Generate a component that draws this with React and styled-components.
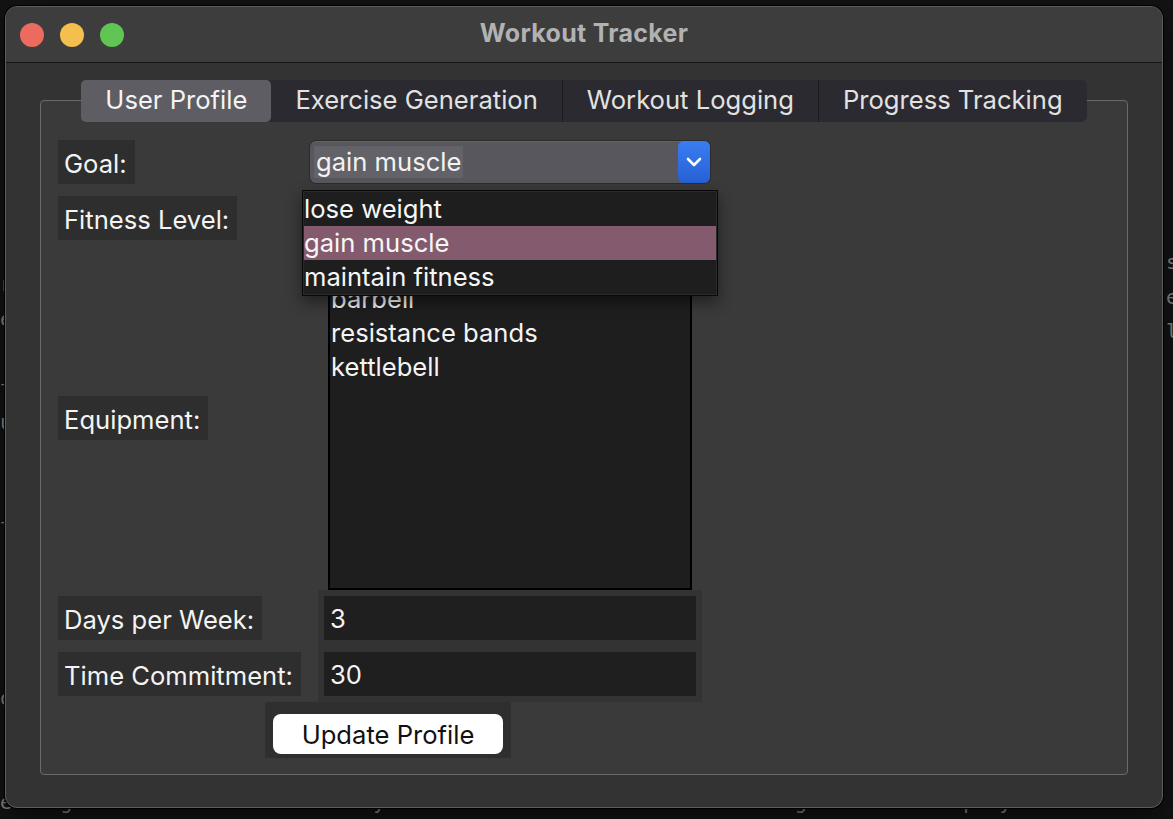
import React from "react";
import styled, { createGlobalStyle } from "styled-components";

const GlobalStyle = createGlobalStyle`
  html, body {
    margin: 0;
    padding: 0;
    background: #131313;
  }
  body {
    font-family: Inter, "Noto Sans", sans-serif;
  }
`;

const FONT = "25.6px";

const Desktop = styled.div`
  position: relative;
  width: 1173px;
  height: 819px;
  overflow: hidden;
  background: #131313;
  display: grid;
  grid-template-columns: 1166px 1fr;
  align-items: end;
`;

const Backdrop = styled.pre`
  margin: 0;
  font-family: "DejaVu Sans Mono", "Liberation Mono", monospace;
  font-size: 20px;
  line-height: 34.5px;
  color: #8a8a8a;
  white-space: pre;
  overflow: hidden;
  align-self: ${(p) => (p.$top ? "start" : "end")};
  padding-top: ${(p) => (p.$top ? "245px" : "0")};
`;

const Window = styled.div`
  position: absolute;
  left: 5px;
  top: 6px;
  width: 1158px;
  height: 802px;
  box-sizing: border-box;
  border: 1px solid #5c5c5c;
  border-radius: 12px;
  background: #333333;
  overflow: hidden;
  display: flex;
  flex-direction: column;
  box-shadow: 0 0 0 1px #000, 0 12px 34px rgba(0, 0, 0, 0.55);
`;

const TitleBar = styled.div`
  height: 55px;
  flex: none;
  background: #3d3d3d;
  border-bottom: 1px solid #141414;
  display: grid;
  grid-template-columns: 1fr auto 1fr;
  align-items: center;
`;

const Lights = styled.div`
  display: flex;
  gap: 16px;
  padding-left: 14px;
`;

const Light = styled.span`
  width: 24px;
  height: 24px;
  border-radius: 50%;
  background: ${(p) => p.$color};
`;

const Title = styled.div`
  font-size: 25px;
  font-weight: 700;
  color: #b2b2b2;
  letter-spacing: 0.3px;
  margin-top: -3px;
`;

const Content = styled.div`
  flex: 1;
  display: flex;
  flex-direction: column;
  padding: 17px 34px 32px;
`;

const TabBar = styled.div`
  align-self: center;
  display: flex;
  height: 42px;
  background: #2b2a30;
  border-radius: 6px;
  position: relative;
  z-index: 1;
  margin-bottom: -22px;
`;

const Tab = styled.div`
  display: flex;
  align-items: center;
  padding: 0 24px;
  font-size: ${FONT};
  line-height: 1;
  padding-bottom: 2px;
  color: ${(p) => (p.$active ? "#f4f4f4" : "#e2e2e2")};
  background: ${(p) => (p.$active ? "#5e5d63" : "transparent")};
  border-radius: ${(p) => (p.$active ? "5px" : "0")};
  border-left: ${(p) => (p.$divider ? "1px solid #1c1c1f" : "none")};
`;

const Pane = styled.div`
  flex: 1;
  border: 1px solid #6a6a6a;
  border-radius: 4px;
  background: #3a3a3a;
  padding: 33px 17px 0;
`;

const Form = styled.div`
  display: grid;
  grid-template-columns: 244px 416px;
  grid-template-rows: 56px 56px 344px 56px 56px 56px;
`;

const Label = styled.div`
  align-self: center;
  justify-self: start;
  height: 44px;
  box-sizing: border-box;
  padding: 3px 8px 0 6px;
  display: flex;
  align-items: center;
  background: #2e2e2e;
  font-size: ${FONT};
  color: #f4f4f4;
`;

const Field = styled.div`
  position: relative;
  display: flex;
  align-items: center;
  justify-content: center;
`;

const Combo = styled.div`
  width: 400px;
  height: 42px;
  box-sizing: border-box;
  border-radius: 6px;
  background: #58575d;
  display: flex;
  align-items: center;
  padding-left: 4px;
  box-shadow: inset 0 1px 0 rgba(255, 255, 255, 0.07), 0 0 0 1px rgba(0, 0, 0, 0.25);
`;

const ComboText = styled.span`
  height: 32px;
  line-height: 32px;
  padding: 0 2px;
  background: #636268;
  font-size: ${FONT};
  color: #f2f2f2;
`;

const ComboArrow = styled.span`
  margin-left: auto;
  width: 32px;
  height: 42px;
  border-radius: 6px;
  background: linear-gradient(#3a7df2, #2560d4);
  display: flex;
  align-items: center;
  justify-content: center;
`;

const Popup = styled.div`
  position: absolute;
  top: 100%;
  left: 0;
  right: 0;
  z-index: 5;
  border: 1px solid #070707;
  padding: 1px;
  background: #2a2a2a;
  box-shadow: 0 6px 14px rgba(0, 0, 0, 0.45);
`;

const PopupItem = styled.div`
  height: 34px;
  line-height: 34px;
  font-size: ${FONT};
  color: #f6f6f6;
  background: ${(p) => (p.$selected ? "#845b6e" : "#1e1e1e")};
`;

const ListBox = styled.div`
  width: 364px;
  height: 344px;
  box-sizing: border-box;
  border: 2px solid #000;
  background: #1e1e1e;
  align-self: stretch;
`;

const ListItem = styled.div`
  height: 34px;
  line-height: 34px;
  padding-left: 1px;
  font-size: ${FONT};
  color: #f4f4f4;
`;

const EntryFrame = styled.div`
  width: 384px;
  height: 56px;
  box-sizing: border-box;
  padding: 6px;
  background: #333333;
`;

const Entry = styled.div`
  height: 44px;
  box-sizing: border-box;
  padding: 1px 6px 0;
  display: flex;
  align-items: center;
  background: #1f1f1f;
  font-size: ${FONT};
  color: #f4f4f4;
`;

const ButtonCell = styled.div`
  grid-column: 1 / span 2;
  justify-self: center;
  width: 246px;
  height: 56px;
  box-sizing: border-box;
  padding: 12px 8px 4px;
  background: #2f2f2f;
`;

const Button = styled.button`
  width: 100%;
  height: 40px;
  border: none;
  border-radius: 8px;
  background: #ffffff;
  font-family: inherit;
  font-size: ${FONT};
  color: #111;
  padding: 0;
`;

const Chevron = () => (
  <svg width="16" height="10" viewBox="0 0 16 10">
    <path d="M2 2 L8 8 L14 2" fill="none" stroke="#fff" strokeWidth="2.6" strokeLinecap="round" strokeLinejoin="round" />
  </svg>
);

const tabs = ["User Profile", "Exercise Generation", "Workout Logging", "Progress Tracking"];
const goals = ["lose weight", "gain muscle", "maintain fitness"];
const equipment = ["dumbbells", "barbell", "resistance bands", "kettlebell"];

// terminal text behind the window; only the edges peek out
const leftLines = ["", "", "r", "e", "", "t", "u", "", "", "t", ":", "", "", "", "o", "", ""];
const bottomLine =
  "e `Log Workout` button to save your workouts. A confirmation message will be displayed.";
const rightLines = ["s", "e", "l"];

export default function App() {
  return (
    <>
      <GlobalStyle />
      <Desktop>
        <Backdrop>{[...leftLines, bottomLine].join("\n")}</Backdrop>
        <Backdrop $top>{rightLines.join("\n")}</Backdrop>
        <Window>
          <TitleBar>
            <Lights>
              <Light $color="#ec6a5e" />
              <Light $color="#f4bf4f" />
              <Light $color="#61c554" />
            </Lights>
            <Title>Workout Tracker</Title>
            <span />
          </TitleBar>
          <Content>
            <TabBar>
              {tabs.map((t, i) => (
                <Tab key={t} $active={i === 0} $divider={i > 1}>
                  {t}
                </Tab>
              ))}
            </TabBar>
            <Pane>
              <Form>
                <Label>Goal:</Label>
                <Field>
                  <Combo>
                    <ComboText>gain muscle</ComboText>
                    <ComboArrow>
                      <Chevron />
                    </ComboArrow>
                  </Combo>
                  <Popup>
                    {goals.map((g) => (
                      <PopupItem key={g} $selected={g === "gain muscle"}>
                        {g}
                      </PopupItem>
                    ))}
                  </Popup>
                </Field>

                <Label>Fitness Level:</Label>
                <Field>
                  <Combo>
                    <ComboText>beginner</ComboText>
                    <ComboArrow>
                      <Chevron />
                    </ComboArrow>
                  </Combo>
                </Field>

                <Label>Equipment:</Label>
                <Field>
                  <ListBox>
                    {equipment.map((e) => (
                      <ListItem key={e}>{e}</ListItem>
                    ))}
                  </ListBox>
                </Field>

                <Label>Days per Week:</Label>
                <Field>
                  <EntryFrame>
                    <Entry>3</Entry>
                  </EntryFrame>
                </Field>

                <Label>Time Commitment:</Label>
                <Field>
                  <EntryFrame>
                    <Entry>30</Entry>
                  </EntryFrame>
                </Field>

                <ButtonCell>
                  <Button>Update Profile</Button>
                </ButtonCell>
              </Form>
            </Pane>
          </Content>
        </Window>
      </Desktop>
    </>
  );
}
